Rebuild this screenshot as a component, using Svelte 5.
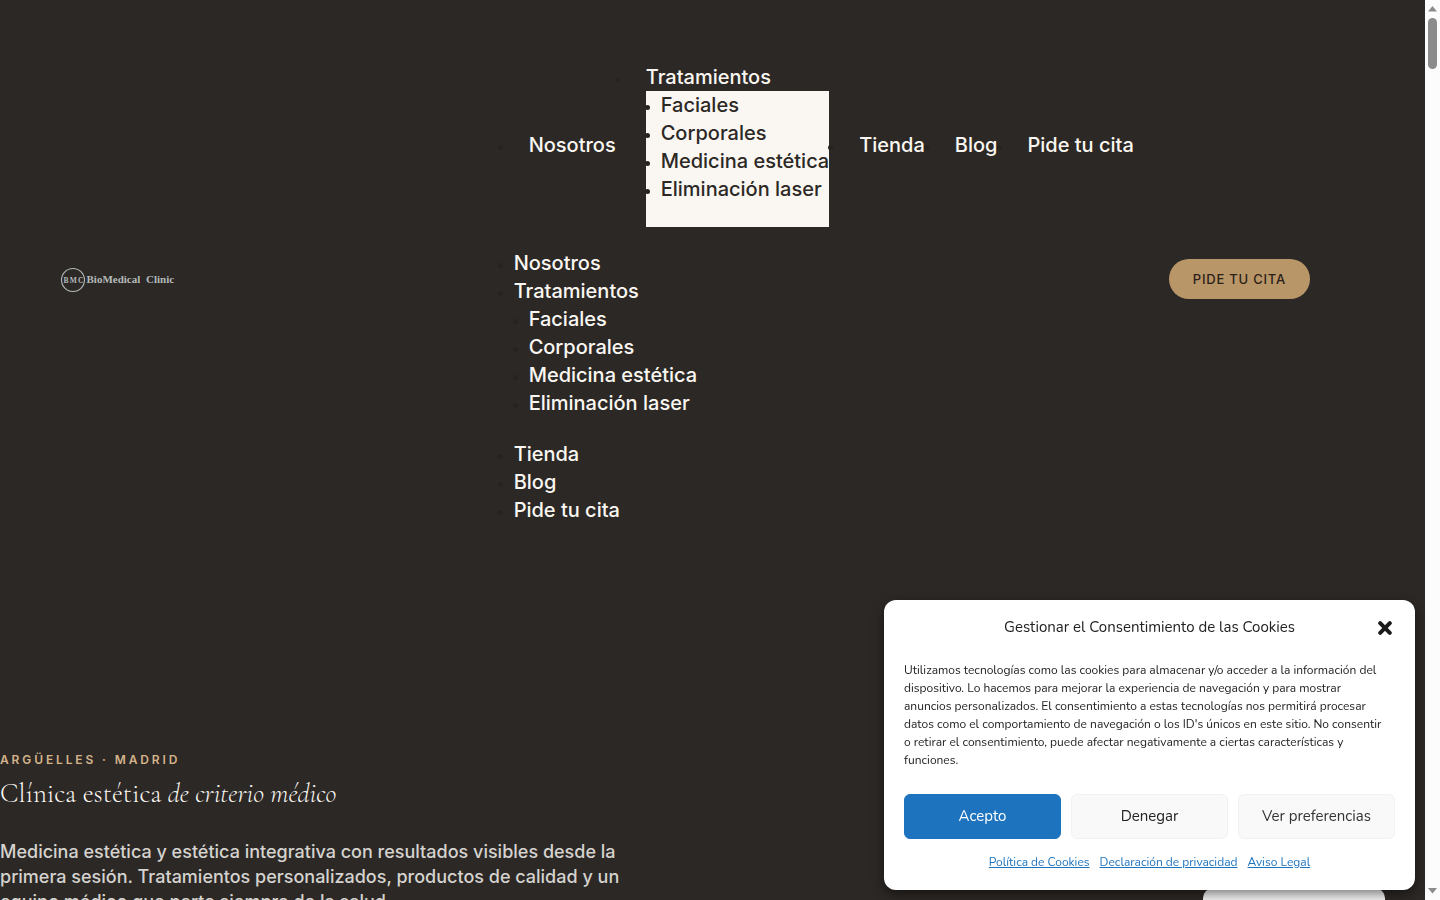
<script>
  const treatments = ['Faciales', 'Corporales', 'Medicina estética', 'Eliminación laser'];
  const menu = [
    { label: 'Nosotros' },
    { label: 'Tratamientos', children: treatments },
    { label: 'Tienda' },
    { label: 'Blog' },
    { label: 'Pide tu cita' }
  ];
  const policies = ['Política de Cookies', 'Declaración de privacidad', 'Aviso Legal'];
  let open = $state(true);
</script>

{#snippet items()}
  {#each menu as item}
    <li>
      <a href="#top">{item.label}</a>
      {#if item.children}
        <ul class="sub">
          {#each item.children as child}
            <li><a href="#top">{child}</a></li>
          {/each}
        </ul>
      {/if}
    </li>
  {/each}
{/snippet}

<div class="shell">
  <div class="page" id="top">
    <header>
      <a class="logo" href="#top" aria-label="BioMedical Clinic">
        <svg width="115" height="26" viewBox="0 0 115 26" aria-hidden="true">
          <circle cx="13" cy="13" r="11.5" fill="none" stroke="#b3bab9" stroke-width="1.1" />
          <g fill="#b3bab9" font-family="Liberation Serif, serif" font-weight="700">
            <text x="3.5" y="15.5" font-size="7.5">B</text>
            <text x="9.7" y="15.5" font-size="7.5">M</text>
            <text x="17.9" y="15.5" font-size="7.5">C</text>
            <text x="26.5" y="16" font-size="11">BioMedical</text>
            <text x="86" y="16" font-size="11">Clinic</text>
          </g>
        </svg>
      </a>
      <nav aria-label="Principal">
        <ul class="bar">{@render items()}</ul>
        <ul class="stack">{@render items()}</ul>
      </nav>
      <a class="cta" href="#cita">PIDE TU CITA</a>
    </header>

    <main>
      <p class="eyebrow">ARGÜELLES · MADRID</p>
      <h1>Clínica estética <em>de criterio médico</em></h1>
      <p class="lead">
        Medicina estética y estética integrativa con resultados visibles desde la primera sesión.
        Tratamientos personalizados, productos de calidad y un equipo médico que parte siempre de la
        salud.
      </p>
    </main>
  </div>

  <div class="scroll" aria-hidden="true">
    <svg width="15" height="16" viewBox="0 0 15 16"><path d="M3 11.5 7.5 6 12 11.5z" fill="#8b8b8b" /></svg>
    <div class="track"><div class="thumb"></div></div>
    <svg width="15" height="16" viewBox="0 0 15 16"><path d="M3 4 7.5 9.500 12 4z" fill="#8b8b8b" /></svg>
  </div>
</div>

<div class="tab"></div>

{#if open}
  <div class="cookies" role="dialog" aria-labelledby="cookie-title">
    <div class="head">
      <h2 id="cookie-title">Gestionar el Consentimiento de las Cookies</h2>
      <button class="close" aria-label="Cerrar" onclick={() => (open = false)}>
        <svg width="14" height="14" viewBox="0 0 14 14"><path d="M2.200 2.200 11.800 11.800M11.800 2.200 2.200 11.800" stroke="#1b1b1b" stroke-width="4" stroke-linecap="round" /></svg>
      </button>
    </div>
    <p>
      Utilizamos tecnologías como las cookies para almacenar y/o acceder a la información del
      dispositivo. Lo hacemos para mejorar la experiencia de navegación y para mostrar
      anuncios personalizados. El consentimiento a estas tecnologías nos permitirá procesar
      datos como el comportamiento de navegación o los ID's únicos en este sitio. No consentir
      o retirar el consentimiento, puede afectar negativamente a ciertas características y
      funciones.
    </p>
    <div class="actions">
      <button class="accept">Acepto</button>
      <button class="deny">Denegar</button>
      <button>Ver preferencias</button>
    </div>
    <div class="links">
      {#each policies as policy}
        <a href="#top">{policy}</a>
      {/each}
    </div>
  </div>
{/if}

<style>
  :global(body) {
    background: #2c2825;
  }
  .shell {
    display: flex;
    height: 100vh;
    overflow: hidden;
    background: #2c2825;
    color: #222;
    font-family: Inter, sans-serif;
    font-weight: 500;
  }
  .page {
    flex: 1;
    min-width: 0;
  }
  a {
    color: inherit;
    text-decoration: none;
  }
  header {
    display: flex;
    align-items: center;
    gap: 20px;
    padding: 34px 115px 34px 60px;
  }
  .logo {
    margin-right: auto;
    padding-top: 2px;
  }
  .logo svg {
    display: block;
  }
  nav {
    padding-top: 29px;
    font-size: 16px;
    line-height: 28px;
  }
  ul {
    margin: 0;
    padding: 0 0 0 15px;
    list-style: disc;
  }
  li::marker {
    color: #262320;
    font-size: 14px;
  }
  nav a {
    display: block;
    color: #faf7f2;
    font-size: 20px;
  }
  .bar {
    display: flex;
    align-items: center;
    margin-bottom: 22px;
  }
  .bar > li {
    padding: 0 15px;
  }
  .sub {
    padding-bottom: 23px;
  }
  .bar .sub {
    padding-bottom: 24px;
    background: #faf7f2;
  }
  .bar .sub a {
    color: #2c2825;
  }
  .cta {
    padding: 0 24px;
    border-radius: 20px;
    background: #b89668;
    color: #2c2118;
    font-size: 13px;
    line-height: 40px;
    letter-spacing: 0.06em;
    white-space: nowrap;
  }
  main {
    max-width: 640px;
    padding-top: 192px;
  }
  .eyebrow {
    margin: 0;
    color: #d4b48c;
    font-size: 12px;
    font-weight: 600;
    line-height: 20px;
    letter-spacing: 0.24em;
  }
  h1 {
    margin: 7px 0 28px;
    color: #faf7f2;
    font-family: "Cormorant Garamond", "Liberation Serif", serif;
    font-size: 27px;
    font-weight: 300;
    line-height: 34px;
  }
  .lead {
    margin: 0;
    color: #d5d3cf;
    font-size: 18px;
    line-height: 25px;
  }
  .scroll {
    display: flex;
    flex-direction: column;
    width: 15px;
    background: #fcfcfc;
  }
  .scroll svg {
    display: block;
  }
  .track {
    flex: 1;
    padding: 2px 3px;
  }
  .thumb {
    height: 51px;
    border-radius: 5px;
    background: #8b8b8b;
  }
  .tab {
    position: fixed;
    right: 55px;
    bottom: 0;
    width: 182px;
    height: 12px;
    border-radius: 10px 10px 0 0;
    background: #f5f5f5;
  }
  .cookies {
    position: fixed;
    right: 25px;
    bottom: 10px;
    box-sizing: border-box;
    width: 531px;
    padding: 15px 20px 19px;
    border-radius: 12px;
    background: #fff;
    box-shadow: 0 4px 12px rgba(0, 0, 0, 0.5);
    color: #222;
    font-family: Nunito, Lato, sans-serif;
  }
  .head {
    display: grid;
    grid-template-columns: 20px 1fr 20px;
    align-items: center;
  }
  h2 {
    grid-column: 2;
    margin: 0;
    font-size: 15px;
    font-weight: 400;
    line-height: 24px;
    text-align: center;
  }
  button {
    font: inherit;
    cursor: pointer;
  }
  .close {
    display: flex;
    justify-content: center;
    padding: 2px 0 0;
    border: 0;
    background: none;
  }
  .cookies p {
    margin: 22px 0 25px;
    padding-right: 10px;
    font-size: 12px;
    line-height: 18px;
  }
  .actions {
    display: grid;
    grid-template-columns: repeat(3, 1fr);
    gap: 10px;
  }
  .actions button {
    height: 45px;
    padding: 0 10px 1px;
    border: 1px solid #f2f2f2;
    border-radius: 6px;
    background: #f9f9f9;
    color: #333;
    font-size: 15px;
  }
  .actions .deny {
    color: #222;
  }
  .actions .accept {
    border-color: #1e73be;
    background: #1e73be;
    color: #fff;
  }
  .links {
    display: flex;
    justify-content: center;
    gap: 10px;
    margin-top: 14px;
    color: #1e73be;
    font-size: 12px;
    line-height: 18px;
  }
  .links a {
    text-decoration: underline;
  }
</style>
